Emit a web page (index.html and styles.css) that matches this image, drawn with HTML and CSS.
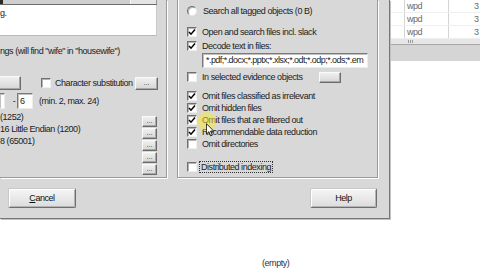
FILE: index.html
```html
<!DOCTYPE html>
<html>
<head>
<meta charset="utf-8">
<link rel="stylesheet" href="styles.css">
</head>
<body>
<div class="screen">
  <div class="top">
    <div class="dialog">
      <div class="groups">
        <div class="group gleft">
          <div class="strip"><span class="strip-dark"></span><span class="strip-thumb"></span></div>
          <div class="memo"><span>g.</span></div>
          <div class="hint">ngs (will find "wife" in "housewife")</div>
          <div class="row charrow">
            <span class="btn btn-cut"></span>
            <span class="cb cb-char"></span>
            <span class="lbl lbl-char">Character substitution</span>
            <span class="btn btn-dots">...</span>
          </div>
          <div class="row lenrow">
            <span class="edit edit-cut"></span>
            <span class="dash">-</span>
            <span class="edit edit-num">6</span>
            <span class="lbl lbl-len">(min. 2, max. 24)</span>
          </div>
          <div class="enc">
            <div class="enc-list">
              <div class="enc-line">(1252)</div>
              <div class="enc-line">16 Little Endian (1200)</div>
              <div class="enc-line">8 (65001)</div>
            </div>
            <div class="enc-btns">
              <span class="btn btn-small">...</span>
              <span class="btn btn-small">...</span>
              <span class="btn btn-small">...</span>
              <span class="btn btn-small">...</span>
              <span class="btn btn-small">...</span>
            </div>
          </div>
        </div>
        <div class="group gright">
          <div class="row r-radio"><span class="radio"></span><span class="lbl">Search all tagged objects (0 B)</span></div>
          <div class="row r-cb1"><span class="cb"><svg viewBox="0 0 8 8"><path d="M1 4 L3 6.2 L7 1.5" fill="none" stroke="#000" stroke-width="1.5"/></svg></span><span class="lbl">Open and search files incl. slack</span></div>
          <div class="row r-cb2"><span class="cb"><svg viewBox="0 0 8 8"><path d="M1 4 L3 6.2 L7 1.5" fill="none" stroke="#000" stroke-width="1.5"/></svg></span><span class="lbl">Decode text in files:</span></div>
          <div class="edit r-edit">*.pdf;*.docx;*.pptx;*.xlsx;*.odt;*.odp;*.ods;*.em</div>
          <div class="row r-cb3"><span class="cb"></span><span class="lbl">In selected evidence objects</span><span class="btn btn-sel"></span></div>
          <div class="omit">
            <div class="row r-omit"><span class="cb"><svg viewBox="0 0 8 8"><path d="M1 4 L3 6.2 L7 1.5" fill="none" stroke="#000" stroke-width="1.5"/></svg></span><span class="lbl">Omit files classified as irrelevant</span></div>
            <div class="row r-omit"><span class="cb"><svg viewBox="0 0 8 8"><path d="M1 4 L3 6.2 L7 1.5" fill="none" stroke="#000" stroke-width="1.5"/></svg></span><span class="lbl">Omit hidden files</span></div>
            <div class="row r-omit"><span class="cb"><svg viewBox="0 0 8 8"><path d="M1 4 L3 6.2 L7 1.5" fill="none" stroke="#000" stroke-width="1.5"/></svg></span><span class="lbl">Omit files that are filtered out</span></div>
            <div class="row r-omit"><span class="cb"><svg viewBox="0 0 8 8"><path d="M1 4 L3 6.2 L7 1.5" fill="none" stroke="#000" stroke-width="1.5"/></svg></span><span class="lbl">Recommendable data reduction</span></div>
            <div class="row r-omit"><span class="cb"></span><span class="lbl">Omit directories</span></div>
          </div>
          <div class="row r-dist"><span class="cb"></span><span class="lbl focus">Distributed indexing</span></div>
        </div>
      </div>
      <div class="buttons">
        <span class="pbtn pbtn-cancel"><u>C</u>ancel</span>
        <span class="pbtn pbtn-help">Help</span>
      </div>
    </div>
    <div class="list">
      <div class="lrow"><span class="c1"></span><span class="c2">wpd</span><span class="c3">3</span></div>
      <div class="lrow"><span class="c1"></span><span class="c2">wpd</span><span class="c3">3</span></div>
      <div class="lrow"><span class="c1"></span><span class="c2">wpd</span><span class="c3">3</span></div>
      <div class="lscroll"><span class="grip"></span></div>
      <div class="lgray"></div>
    </div>
  </div>
  <div class="empty">(empty)</div>
  <div class="highlight"></div>
  <svg class="cursor" viewBox="0 0 10 15"><path d="M0.5 0.5 L0.5 12 L3.2 9.4 L5.2 14 L7 13.2 L5 8.7 L8.6 8.7 Z" fill="#fff" stroke="#000" stroke-width="0.9"/></svg>
</div>
</body>
</html>
```
FILE: styles.css
```css
* { box-sizing: border-box; margin: 0; padding: 0; }
html, body { width: 480px; height: 270px; overflow: hidden; background: #fff; }
body {
  font-family: "Liberation Sans", Arial, sans-serif;
  font-size: 9px;
  letter-spacing: -0.45px;
  color: #1c1c1c;
}
.screen { position: relative; width: 480px; height: 270px; display: flex; flex-direction: column; }
.top { display: flex; align-items: flex-start; height: 220px; flex: none; }

.dialog {
  width: 390px; height: 219px; flex: none;
  background: #d8d8d8;
  border-right: 1px solid #777;
  border-bottom: 1px solid #777;
  box-shadow: 1px 1px 0 #c2c2c2;
  display: flex; flex-direction: column;
}
.groups { display: flex; gap: 10px; height: 178px; flex: none; }
.group {
  height: 178px;
  border: 1px solid #9a9a9a; border-top: none;
  display: flex; flex-direction: column;
}
.gleft { width: 167px; border-left: none; box-shadow: 1px 1px 0 #fff; }
.gright { width: 201px; box-shadow: inset 1px 0 0 #fff, 1px 1px 0 #fff; padding-left: 9px; }

.row { display: flex; align-items: center; white-space: nowrap; flex: none; }
.lbl { margin-left: 5px; line-height: 10px; }

.cb {
  width: 10px; height: 10px; flex: none;
  background: #fff;
  border: 1px solid; border-color: #707070 #efefef #efefef #707070;
  box-shadow: inset 1px 1px 0 #b4b4b4;
  display: flex; align-items: center; justify-content: center;
}
.cb svg { width: 8px; height: 8px; display: block; }
.radio {
  width: 10px; height: 10px; flex: none; border-radius: 50%;
  background: #fff;
  border: 1px solid; border-color: #707070 #e8e8e8 #e8e8e8 #707070;
  box-shadow: inset 1px 1px 0 #b0b0b0;
}

.btn {
  display: flex; align-items: center; justify-content: center; flex: none;
  background: linear-gradient(#f0f0f0, #d6d6d6);
  border: 1px solid; border-color: #fafafa #6c6c6c #6c6c6c #fafafa;
  box-shadow: inset -1px -1px 0 #a8a8a8;
  font-size: 7px; line-height: 7px; color: #333; letter-spacing: 0;
  padding-bottom: 2px;
}
.edit {
  background: #fff;
  border: 1px solid; border-color: #7a7a7a #ececec #ececec #7a7a7a;
  box-shadow: inset 1px 1px 0 #c0c0c0;
  flex: none;
}

/* left group */
.strip {
  width: 157px; height: 5px; flex: none;
  background: #cfcfcf; border-bottom: 1px solid #6a6a6a;
  display: flex;
}
.strip-dark { width: 3px; background: #2a2a2a; }
.strip-thumb { margin-left: auto; width: 27px; background: #e4e4e4; border-left: 1px solid #f6f6f6; border-right: 1px solid #9a9a9a; }
.memo {
  width: 157px; height: 31px; flex: none;
  background: #fff; border-bottom: 1px solid #b8b8b8; border-right: 1px solid #c8c8c8;
  padding-top: 3px; line-height: 10px;
}
.hint { margin-top: 10px; height: 10px; line-height: 10px; white-space: nowrap; flex: none; }
.charrow { margin-top: 20px; height: 14px; }
.btn-cut { width: 21px; height: 14px; border-left: none; }
.cb-char { margin-left: 20px; }
.lbl-char { margin-left: 4px; }
.btn-dots { width: 23px; height: 13px; margin-left: auto; margin-right: 8px; }
.lenrow { margin-top: 3px; height: 16px; }
.edit-cut { width: 5px; height: 16px; border-left: none; }
.dash { width: 6px; margin-left: 6px; text-align: center; line-height: 10px; }
.edit-num { width: 16px; height: 16px; padding-left: 2px; line-height: 14px; }
.lbl-len { margin-left: 6px; }
.enc { margin-top: 2px; display: flex; flex: none; }
.enc-list { width: 142px; }
.enc-line { height: 12px; line-height: 12px; white-space: nowrap; }
.enc-btns { width: 15px; padding-top: 5px; display: flex; flex-direction: column; gap: 1px; }
.btn-small { width: 15px; height: 11px; }

/* right group */
.r-radio { margin-top: 5px; height: 11px; }
.r-radio .lbl { margin-left: 6px; }
.r-cb1 { margin-top: 10px; height: 11px; }
.r-cb2 { margin-top: 3px; height: 11px; }
.r-edit {
  margin-top: 2px; margin-left: 15px; width: 166px; height: 15px; flex: none;
  padding-left: 3px; line-height: 13px; white-space: nowrap; overflow: hidden;
  letter-spacing: -0.55px;
}
.r-cb3 { margin-top: 3px; height: 12px; }
.btn-sel { width: 22px; height: 11px; margin-left: auto; margin-right: 36px; }
.omit { margin-top: 7px; display: flex; flex-direction: column; flex: none; }
.r-omit { height: 12px; }
.r-dist { margin-top: 11px; height: 12px; }
.focus { margin-left: 3px; padding: 0 1px; outline: 1px dotted #333; outline-offset: 0; line-height: 10px; }

.buttons {
  margin-top: 10px; height: 20px; flex: none;
  display: flex; justify-content: space-between;
  padding-left: 8px; padding-right: 12px;
}
.pbtn {
  height: 20px;
  display: flex; align-items: center; justify-content: center;
  background: linear-gradient(#f6f6f6, #dcdcdc);
  border: 1px solid; border-color: #c8c8c8 #6e6e6e #6e6e6e #c8c8c8;
  border-radius: 2px;
  box-shadow: inset 1px 1px 0 #fff, inset -1px -1px 0 #b4b4b4;
  color: #111;
}
.pbtn-cancel { width: 68px; }
.pbtn-help { width: 67px; }

/* list view */
.list { flex: 1; display: flex; flex-direction: column; padding-left: 1px; }
.lrow { display: grid; grid-template-columns: 14px 44px 1fr; height: 13px; border-bottom: 1px solid #efefef; }
.lrow span { line-height: 12px; color: #6a6a6a; white-space: nowrap; overflow: hidden; }
.c1 { border-right: 1px solid #d4d4d4; }
.c2 { border-right: 1px solid #d4d4d4; padding-left: 2px; }
.c3 { padding-left: 25px; }
.lscroll { height: 5px; background: #e6e6e6; padding-left: 17px; padding-top: 1px; }
.grip { display: block; width: 5px; height: 3px; background: repeating-linear-gradient(90deg, #9a9a9a 0 1px, transparent 1px 2px); }
.lgray { height: 17px; background: #d5d5d5; border-top: 1px solid #a8a8a8; }

.empty { margin-top: 38px; margin-left: 262px; height: 10px; line-height: 10px; color: #333; white-space: nowrap; }

.highlight {
  position: absolute; left: 197px; top: 112px; width: 19px; height: 19px;
  border-radius: 50%; background: rgba(250, 232, 40, 0.5);
}
.cursor { position: absolute; left: 206px; top: 123px; width: 9px; height: 14px; }
```
